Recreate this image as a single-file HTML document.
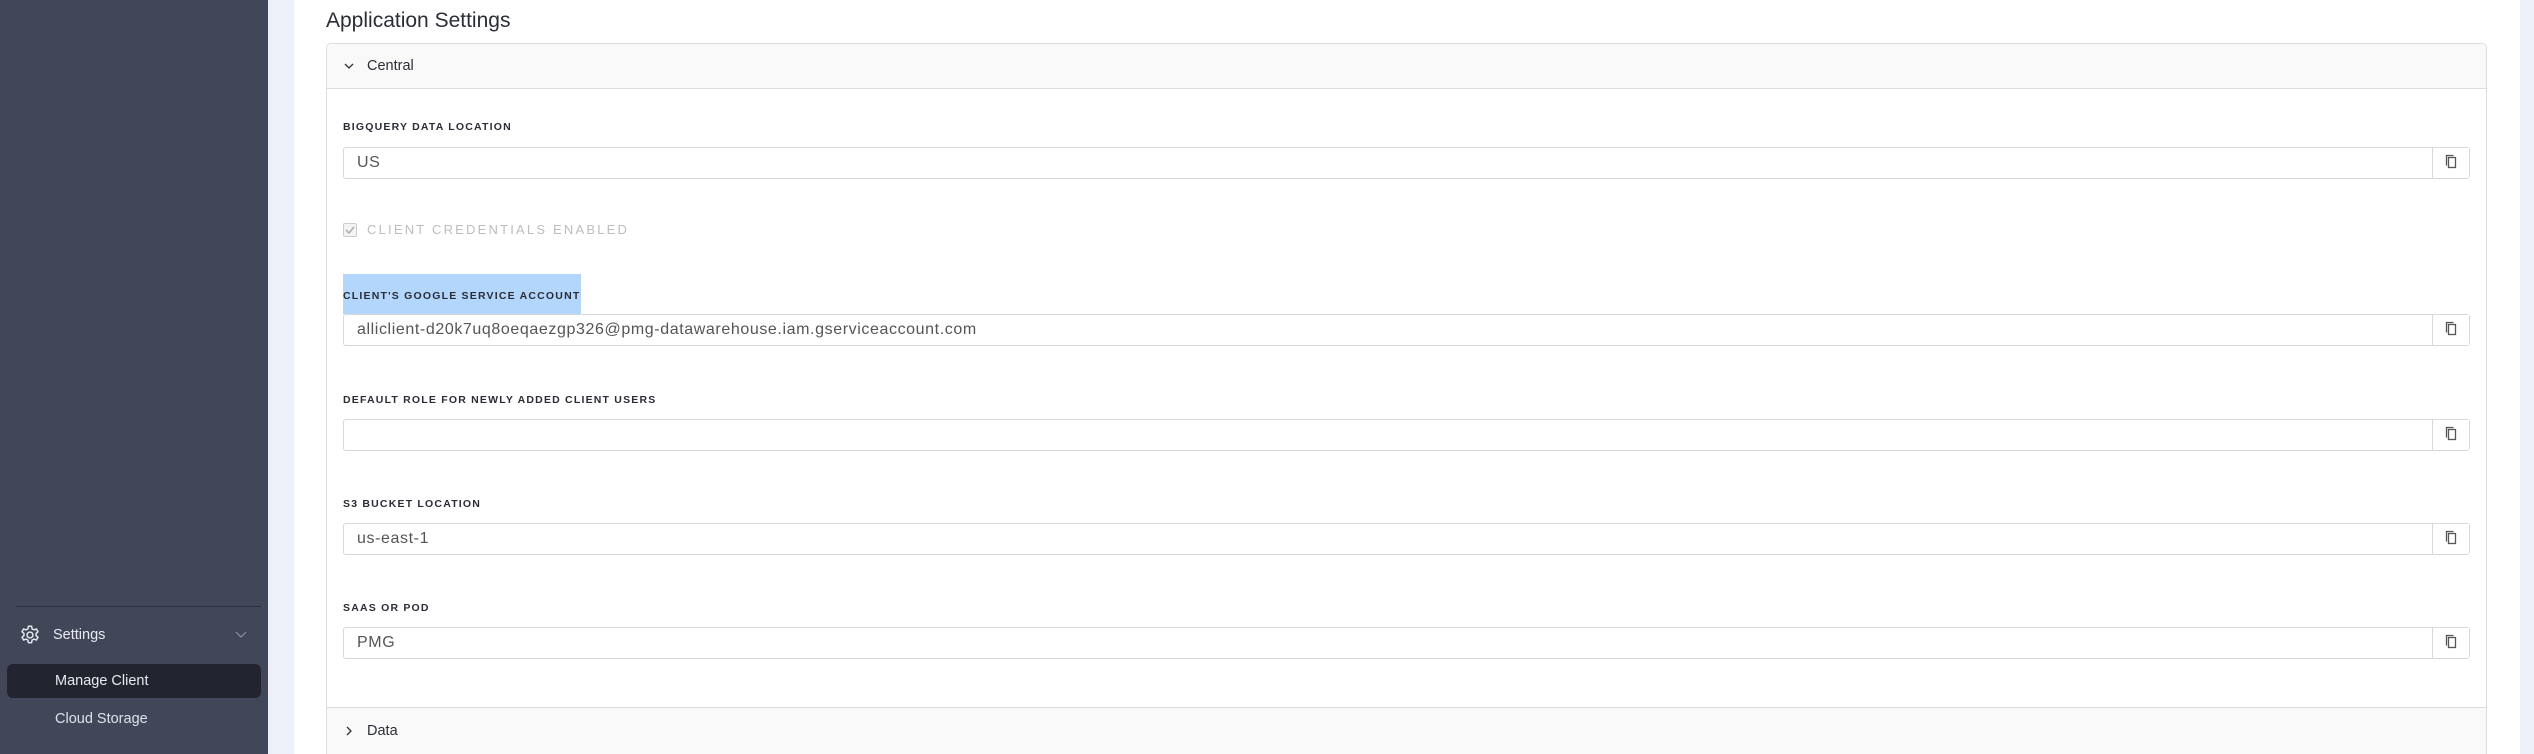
<!DOCTYPE html>
<html><head><style>
*{margin:0;padding:0;box-sizing:border-box}
html,body{width:2534px;height:754px;overflow:hidden}
body{position:relative;background:#fff;font-family:"Liberation Sans",sans-serif}
.abs{position:absolute}
.lbl{position:absolute;left:343px;font-size:10.5px;font-weight:bold;letter-spacing:1.2px;color:#2a2d36;line-height:14px}
.inp{position:absolute;left:343px;width:2127px;height:32px;border:1px solid #d8d8d8;border-radius:3px;background:#fff}
.inp span{position:absolute;left:13px;top:6px;font-size:16px;color:#555;letter-spacing:0.6px}
.inp .btn{position:absolute;right:0;top:0;width:37px;height:30px;border-left:1px solid #d8d8d8;background:#fff}
</style></head><body>
<div class="abs" style="left:0;top:0;width:268px;height:754px;background:#414759"></div>
<div class="abs" style="left:268px;top:0;width:26px;height:754px;background:#edf0f8"></div>
<div class="abs" style="left:2520px;top:0;width:14px;height:754px;background:#edf0f8"></div>

<!-- sidebar -->
<div class="abs" style="left:16px;top:606px;width:245px;height:1px;background:#2c303c"></div>
<svg class="abs" style="left:19px;top:624px" width="22" height="22" viewBox="0 0 24 24" fill="none" stroke="#e6e8ee" stroke-width="1.6"><circle cx="12" cy="12" r="3.2"/><path d="M10.3 2.5h3.4l.6 2.8 2 1.1 2.7-.9 1.7 2.9-2.1 1.9v2.3l2.1 1.9-1.7 2.9-2.7-.9-2 1.1-.6 2.8h-3.4l-.6-2.8-2-1.1-2.7.9-1.7-2.9 2.1-1.9v-2.3L3.3 8.4 5 5.5l2.7.9 2-1.1z"/></svg>
<div class="abs" style="left:53px;top:627px;font-size:14.5px;color:#e8eaf0">Settings</div>
<svg class="abs" style="left:235px;top:631px" width="12" height="8" viewBox="0 0 12 8" fill="none" stroke="#8a8fa0" stroke-width="1.2"><path d="M1 1l5 5 5-5"/></svg>
<div class="abs" style="left:7px;top:664px;width:254px;height:34px;background:#22252f;border-radius:6px"></div>
<div class="abs" style="left:55px;top:673px;font-size:14.5px;color:#e8eaf0">Manage Client</div>
<div class="abs" style="left:55px;top:711px;font-size:14.5px;color:#e0e2ea">Cloud Storage</div>

<!-- content -->
<div class="abs" style="left:326px;top:9px;font-size:21px;color:#2b2e36">Application Settings</div>
<div class="abs" style="left:326px;top:43px;width:2161px;height:720px;border:1px solid #dcdcdc;border-radius:5px;background:#fff"></div>
<div class="abs" style="left:327px;top:44px;width:2159px;height:45px;background:#f9f9f9;border-bottom:1px solid #dcdcdc;border-radius:5px 5px 0 0"></div>
<svg class="abs" style="left:344px;top:63px" width="10" height="7" viewBox="0 0 10 7" fill="none" stroke="#333" stroke-width="1.3"><path d="M1 1l4 4 4-4"/></svg>
<div class="abs" style="left:367px;top:58px;font-size:14.5px;color:#2b2e36">Central</div>

<div class="lbl" style="top:120px">BIGQUERY DATA LOCATION</div>
<div class="inp" style="top:147px"><span>US</span><div class="btn"></div></div>

<div class="abs" style="left:343px;top:223px;width:14px;height:14px;border:1px solid #ccc;border-radius:2px;background:#f4f4f4"></div>
<svg class="abs" style="left:345px;top:226px" width="10" height="8" viewBox="0 0 10 8" fill="none" stroke="#aaa" stroke-width="1.5"><path d="M1 4l3 3 5-6"/></svg>
<div class="abs" style="left:367px;top:222px;font-size:13px;letter-spacing:2.2px;color:#bdbdbd">CLIENT CREDENTIALS ENABLED</div>

<div class="abs" style="left:343px;top:274px;width:238px;height:40px;background:#b3d6fd"></div>
<div class="lbl" style="top:289px">CLIENT'S GOOGLE SERVICE ACCOUNT</div>
<div class="inp" style="top:314px"><span>alliclient-d20k7uq8oeqaezgp326@pmg-datawarehouse.iam.gserviceaccount.com</span><div class="btn"></div></div>

<div class="lbl" style="top:393px">DEFAULT ROLE FOR NEWLY ADDED CLIENT USERS</div>
<div class="inp" style="top:419px"><div class="btn"></div></div>

<div class="lbl" style="top:497px">S3 BUCKET LOCATION</div>
<div class="inp" style="top:523px"><span>us-east-1</span><div class="btn"></div></div>

<div class="lbl" style="top:601px">SAAS OR POD</div>
<div class="inp" style="top:627px"><span>PMG</span><div class="btn"></div></div>

<div class="abs" style="left:327px;top:707px;width:2159px;height:47px;background:#f9f9f9;border-top:1px solid #dcdcdc"></div>
<svg class="abs" style="left:346px;top:726px" width="7" height="10" viewBox="0 0 7 10" fill="none" stroke="#333" stroke-width="1.3"><path d="M1 1l4 4-4 4"/></svg>
<div class="abs" style="left:367px;top:723px;font-size:14.5px;color:#2b2e36">Data</div>

<!-- copy icons -->
<svg width="0" height="0" style="position:absolute"><defs><g id="cp"><rect x="4.5" y="3.5" width="7" height="10" fill="#fff" stroke="#555" stroke-width="1.3"/><path d="M2.5 11.5V1.5h7" fill="none" stroke="#555" stroke-width="1.3"/></g></defs></svg>
<svg class="abs" style="left:2444px;top:154px" width="14" height="16"><use href="#cp"/></svg>
<svg class="abs" style="left:2444px;top:321px" width="14" height="16"><use href="#cp"/></svg>
<svg class="abs" style="left:2444px;top:426px" width="14" height="16"><use href="#cp"/></svg>
<svg class="abs" style="left:2444px;top:530px" width="14" height="16"><use href="#cp"/></svg>
<svg class="abs" style="left:2444px;top:634px" width="14" height="16"><use href="#cp"/></svg>
</body></html>
